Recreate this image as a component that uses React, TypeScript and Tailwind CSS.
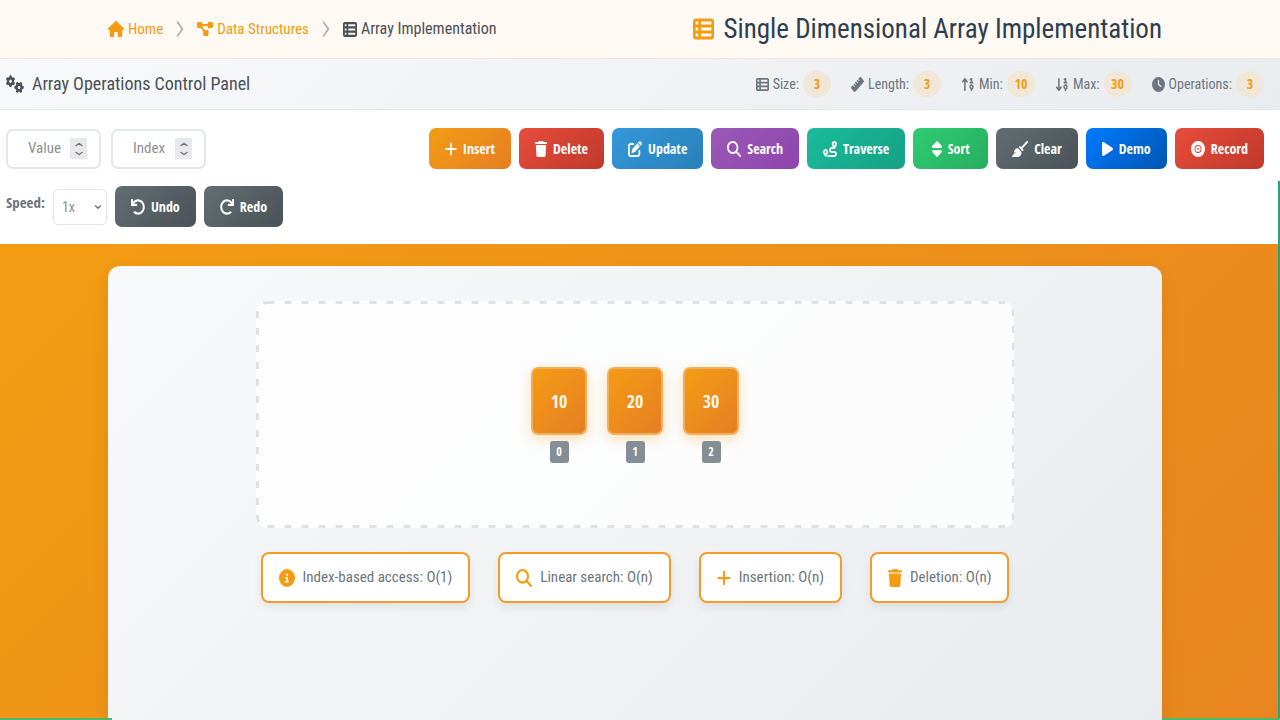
import { useState } from 'react';
import type { ReactNode } from 'react';
import type { IconType } from 'react-icons';
import {
  FaArrowDown19, FaArrowUp19, FaBroom, FaCircleInfo, FaClock,
  FaDiagramProject, FaGears, FaHouse, FaMagnifyingGlass, FaPenToSquare, FaPlay, FaPlus,
  FaRecordVinyl, FaRoute, FaRuler, FaSort, FaTableList, FaTrash,
} from 'react-icons/fa6';
import { FaRedo, FaUndo } from 'react-icons/fa';
import { FiChevronDown, FiChevronRight, FiChevronUp } from 'react-icons/fi';

function Icon({ as: Glyph, className }: { as: IconType; className: string }) {
  return <Glyph className={`shrink-0 ${className}`} preserveAspectRatio="none" aria-hidden="true" />;
}

const bold = "font-['Open_Sans_Condensed','Open_Sans',sans-serif] font-bold";

const stats: { icon: IconType; size: string; label: string; value: number }[] = [
  { icon: FaTableList, size: 'w-[13px] h-[15px]', label: 'Size:', value: 3 },
  { icon: FaRuler, size: 'w-[13px] h-[15px]', label: 'Length:', value: 3 },
  { icon: FaArrowUp19, size: 'w-[14px] h-[15px]', label: 'Min:', value: 10 },
  { icon: FaArrowDown19, size: 'w-[14px] h-[15px]', label: 'Max:', value: 30 },
  { icon: FaClock, size: 'w-[13px] h-[15px]', label: 'Operations:', value: 3 },
];

const actions: { icon: IconType; size: string; label: string; tone: string }[] = [
  { icon: FaPlus, size: 'w-3 h-4', label: 'Insert', tone: 'from-[#f39c12] to-[#e67e22]' },
  { icon: FaTrash, size: 'w-3 h-4', label: 'Delete', tone: 'from-[#e74c3c] to-[#c0392b]' },
  { icon: FaPenToSquare, size: 'w-3.5 h-4', label: 'Update', tone: 'from-[#3498db] to-[#2980b9]' },
  { icon: FaMagnifyingGlass, size: 'w-3.5 h-4', label: 'Search', tone: 'from-[#9b59b6] to-[#8e44ad]' },
  { icon: FaRoute, size: 'w-3.5 h-4', label: 'Traverse', tone: 'from-[#1abc9c] to-[#16a085]' },
  { icon: FaSort, size: 'w-2.5 h-[18px]', label: 'Sort', tone: 'from-[#2ecc71] to-[#27ae60]' },
  { icon: FaBroom, size: 'w-4 h-4', label: 'Clear', tone: 'from-[#636e72] to-[#4b5259]' },
  { icon: FaPlay, size: 'w-[11px] h-4', label: 'Demo', tone: 'from-[#007bff] to-[#0056b3]' },
  { icon: FaRecordVinyl, size: 'w-3.5 h-4', label: 'Record', tone: 'from-[#e74c3c] to-[#c0392b]' },
];

const facts: { icon: IconType; size: string; label: string }[] = [
  { icon: FaCircleInfo, size: 'w-4 h-[18px]', label: 'Index-based access: O(1)' },
  { icon: FaMagnifyingGlass, size: 'w-4 h-[18px]', label: 'Linear search: O(n)' },
  { icon: FaPlus, size: 'w-3.5 h-[18px]', label: 'Insertion: O(n)' },
  { icon: FaTrash, size: 'w-3.5 h-[18px]', label: 'Deletion: O(n)' },
];

function ActionButton({ icon, size, tone, children }: { icon: IconType; size: string; tone: string; children: ReactNode }) {
  return (
    <button type="button" className={`flex h-[41px] min-w-[75px] items-center justify-center gap-1.5 rounded-[7px] bg-linear-135 px-4 text-sm text-white ${bold} ${tone}`}>
      <Icon as={icon} className={size} />
      {children}
    </button>
  );
}

function NumberField({ label }: { label: string }) {
  const [value, setValue] = useState('');
  const step = (by: number) => setValue(String(Number(value) + by));
  return (
    <div className="flex h-10 w-[95px] items-center justify-between rounded-[7px] border-2 border-[#e3e6ea] bg-white pr-3 pl-5">
      <input
        type="number"
        aria-label={label}
        placeholder={label}
        value={value}
        onChange={(e) => setValue(e.target.value)}
        className="w-10 min-w-0 appearance-none text-[15px] text-gray-600 outline-none [appearance:textfield] placeholder:text-[#8d9093] [&::-webkit-inner-spin-button]:hidden"
      />
      <span className="flex h-[21px] w-[17px] shrink-0 flex-col items-center justify-center bg-[#e9e9ed] text-[#6f6f75]">
        <button type="button" aria-label={`Increase ${label}`} onClick={() => step(1)}><FiChevronUp className="h-[9px] w-3" strokeWidth={3} preserveAspectRatio="none" /></button>
        <button type="button" aria-label={`Decrease ${label}`} onClick={() => step(-1)}><FiChevronDown className="h-[9px] w-3" strokeWidth={3} preserveAspectRatio="none" /></button>
      </span>
    </div>
  );
}

function Separator() {
  return <li aria-hidden="true"><FiChevronRight className="h-[18px] w-2 text-[#adb1b5]" viewBox="7 4 10 16" preserveAspectRatio="none" /></li>;
}

export default function App() {
  return (
    <div className="flex min-h-screen flex-col bg-white font-['Roboto_Condensed',Roboto,sans-serif] text-[#495057]">
      <header className="flex h-[59px] items-center justify-between border-b border-[#f0e6dc] bg-[#fef9f2] pr-[118px] pl-[108px]">
        <nav aria-label="Breadcrumb">
          <ol className="flex items-center gap-[13px] text-[15px] text-[#f39c12]">
            <li><a href="#home" className="flex items-center gap-1"><Icon as={FaHouse} className="h-4 w-4" />Home</a></li>
            <Separator />
            <li><a href="#data-structures" className="flex items-center gap-1"><Icon as={FaDiagramProject} className="h-4 w-4" />Data Structures</a></li>
            <Separator />
            <li className="flex items-center gap-1 text-base text-[#495057]" aria-current="page"><Icon as={FaTableList} className="h-[17px] w-3.5" />Array Implementation</li>
          </ol>
        </nav>
        <h1 className="flex items-center gap-2.5 text-[27px] leading-8 text-[#2c3e50]">
          <Icon as={FaTableList} className="h-6 w-[21px] text-[#f39c12]" />
          Single Dimensional Array Implementation
        </h1>
      </header>

      <section aria-label="Array operations">
        <div className="flex h-[51px] items-center justify-between border-b border-[#e4e7ea] bg-linear-135 from-[#f8f9fa] to-[#e9ecef] pr-4 pl-1.5">
          <h2 className="flex items-center gap-2 text-lg">
            <Icon as={FaGears} className="h-[18px] w-[18px]" />
            Array Operations Control Panel
          </h2>
          <dl className="flex items-center gap-5 text-sm text-[#6c757d]">
            {stats.map((s) => (
              <div key={s.label} className="flex items-center gap-1">
                <dt className="flex items-center gap-1"><Icon as={s.icon} className={s.size} />{s.label}</dt>
                <dd className={`flex h-[26px] w-7 items-center justify-center rounded-full bg-[#f1e7d8] text-sm text-[#f39c12] ${bold}`}>{s.value}</dd>
              </div>
            ))}
          </dl>
        </div>

        <div className="flex flex-col gap-[17px] pt-[18px] pr-4 pb-[17px] pl-1.5">
          <div className="flex items-center justify-between">
            <div className="flex gap-2.5">
              <NumberField label="Value" />
              <NumberField label="Index" />
            </div>
            <div className="flex gap-2">
              {actions.map((a) => (
                <ActionButton key={a.label} icon={a.icon} size={a.size} tone={a.tone}>{a.label}</ActionButton>
              ))}
            </div>
          </div>
          <div className="flex items-center gap-2">
            <label htmlFor="speed" className={`pb-2 text-[15px] text-[#6c757d] ${bold}`}>Speed:</label>
            <div className="grid h-9 w-[54px] items-center">
              <select id="speed" className="col-start-1 row-start-1 h-9 w-full appearance-none rounded-[5px] border border-[#e3e6ea] bg-white px-2 text-sm text-[#8d9093]">
                <option>1x</option>
                <option>0.5x</option>
                <option>2x</option>
              </select>
              <FiChevronDown className="pointer-events-none col-start-1 row-start-1 mr-1 h-3 w-2.5 justify-self-end text-[#6f6f75]" strokeWidth={3} />
            </div>
            <ActionButton icon={FaUndo} size="w-3.5 h-4" tone="from-[#636e72] to-[#4b5259]">Undo</ActionButton>
            <ActionButton icon={FaRedo} size="w-3.5 h-4" tone="from-[#636e72] to-[#4b5259]">Redo</ActionButton>
          </div>
        </div>
      </section>

      <main className="flex flex-1 flex-col bg-linear-135 from-[#f39c12] to-[#e8851f] pt-[22px] pr-[118px] pl-[108px]">
        <div className="flex flex-1 flex-col items-center rounded-t-xl bg-linear-135 from-[#f8f9fa] to-[#e9ecef] pt-[35px] shadow-[0_9px_20px_rgba(0,0,0,0.08)]">
          <div className="relative flex h-[227px] w-[72%] items-center justify-center gap-5 rounded-xl bg-white/80">
            <svg className="pointer-events-none absolute inset-0 h-full w-full" aria-hidden="true">
              <rect x="1.5" y="1.5" rx="10" className="h-[calc(100%-3px)] w-[calc(100%-3px)] fill-none stroke-[#dee2e6] stroke-3" strokeDasharray="7 10" />
            </svg>
            {[10, 20, 30].map((value, index) => (
              <div key={value} className="flex flex-col items-center gap-1.5">
                <div className={`flex h-[68px] w-14 items-center justify-center rounded-[7px] border-2 border-[#f3ae5b] bg-linear-135 from-[#f39c12] to-[#e67e22] text-lg text-[#fff7ea] shadow-[0_4px_13px_rgba(243,156,18,0.3)] ${bold}`}>{value}</div>
                <div className={`flex h-[22px] w-[19px] items-center justify-center rounded-[3px] bg-[#868e95] text-xs text-white ${bold}`}>{index}</div>
              </div>
            ))}
          </div>
          <ul className="mt-6 flex justify-center gap-7">
            {facts.map((f) => (
              <li key={f.label} className="flex h-[51px] items-center gap-2 rounded-lg border-2 border-[#f39c2c] bg-white px-4 text-[15px] text-[#6c757d] shadow-[0_4px_10px_rgba(0,0,0,0.08)]">
                <Icon as={f.icon} className={`text-[#f39c12] ${f.size}`} />
                {f.label}
              </li>
            ))}
          </ul>
        </div>
      </main>

      <div className="fixed top-[181px] right-0 bottom-0 w-0.5 bg-[#27a583]" />
      <div className="fixed bottom-0 left-0 h-0.5 w-28 bg-[#4fb96b]" />
      <div className="fixed right-0 bottom-0 h-0.5 w-[118px] bg-[#4fb96b]" />
    </div>
  );
}
